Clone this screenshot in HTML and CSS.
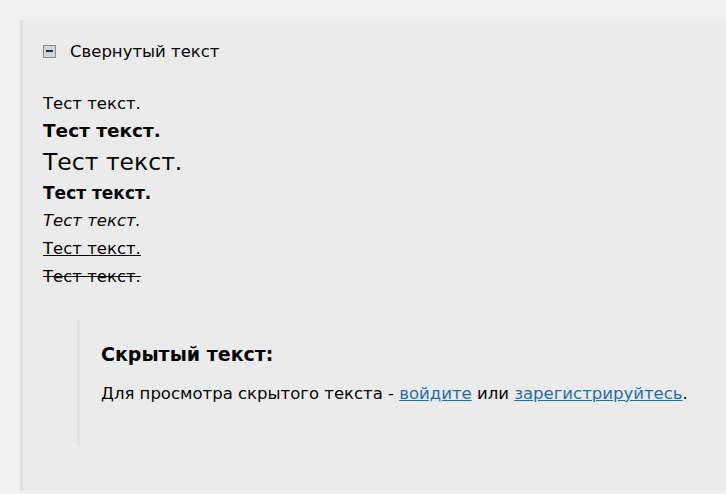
FILE: index.html
```html
<!DOCTYPE html>
<html>

<head>
  <title>Спойлер</title>
  <link rel="stylesheet" href="styles.css">
</head>

<body>
  <div class="spoiler">
    <div class="spoiler-head">
      <span class="toggle"></span>
      <span class="spoiler-title">Свернутый текст</span>
    </div>
    <div class="spoiler-body">
      <div class="line first">Тест текст.</div>
      <div class="line bold">Тест текст.</div>
      <div class="line big">Тест текст.</div>
      <div class="line bold small-bold">Тест текст.</div>
      <div class="line italic">Тест текст.</div>
      <div class="line under">Тест текст.</div>
      <div class="line strike">Тест текст.</div>

      <div class="hidden-box">
        <div class="hidden-title">Скрытый текст:</div>
        <p>Для просмотра скрытого текста - <a href="#">войдите</a> или <a href="#">зарегистрируйтесь</a>.</p>
      </div>
    </div>
  </div>
</body>

</html>
```

FILE: styles.css
```css
body {
margin: 0;
padding: 20px 0 3px 20px;
background-color: #f0f0f0;
font-family: "DejaVu Sans", Verdana, sans-serif;
font-size: 16.5px;
color: #050505;
}

.spoiler {
box-sizing: border-box;
height: 471px;
border-left: 3px solid #e0e0e0;
background-color: #ebebeb;
padding: 20px 20px 0 20px;
}

.spoiler-head {
display: flex;
align-items: center;
height: 22px;
}

.toggle {
position: relative;
width: 11px;
height: 11px;
border: 1px solid #8a8f93;
background-color: #d2d5d7;
margin-right: 14px;
}

.toggle::after {
content: "";
position: absolute;
left: 2px;
top: 4px;
width: 7px;
height: 2px;
background-color: #2a2d30;
}

.spoiler-body {
padding-top: 27.5px;
}

.line {
line-height: 28px;
}

.first {
line-height: 27px;
}

.bold {
font-size: 18.5px;
font-weight: bold;
}

.small-bold {
font-size: 17px;
}

.big {
font-size: 23.5px;
line-height: 34px;
}

.italic {
font-style: italic;
}

.under {
text-decoration: underline;
}

.strike {
text-decoration: line-through;
}

.hidden-box {
margin: 29.5px 0 0 34px;
border-left: 3px solid #e2e2e2;
padding: 21.5px 0 40.5px 21px;
}

.hidden-title {
font-size: 19px;
font-weight: bold;
line-height: 24px;
}

.hidden-box p {
margin: 17px 0 0 0;
line-height: 22px;
}

.hidden-box a {
color: #1f6fa8;
}
```
